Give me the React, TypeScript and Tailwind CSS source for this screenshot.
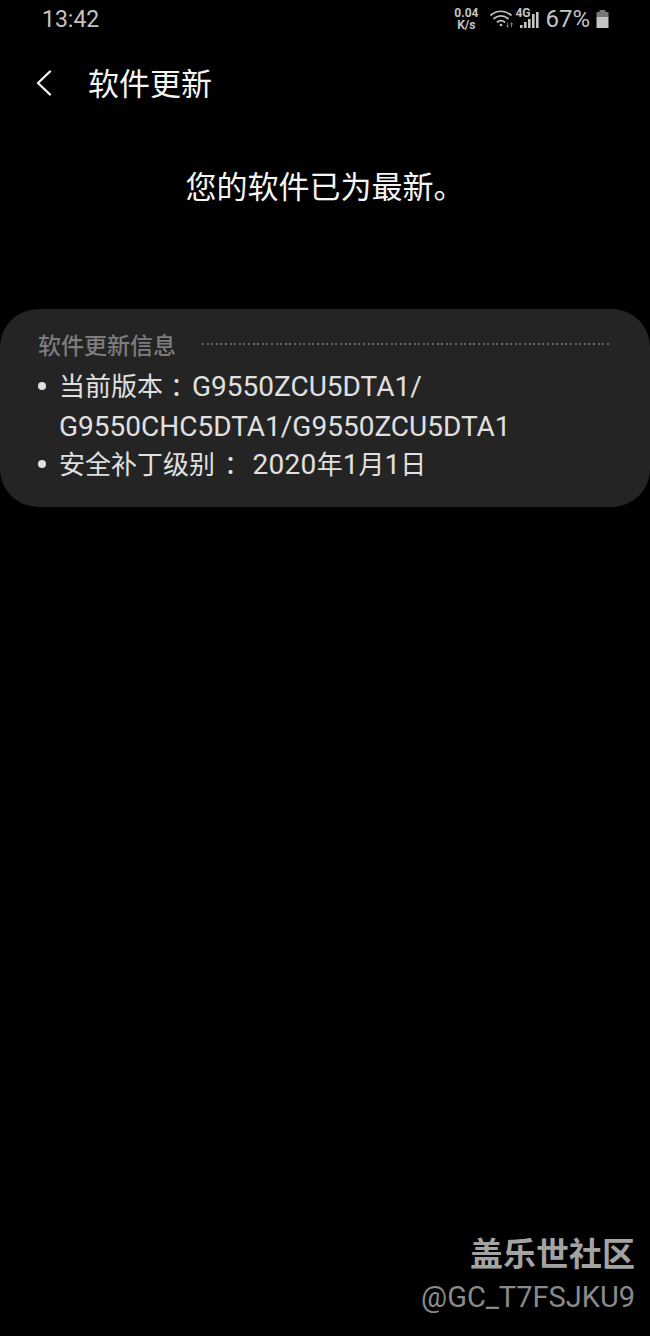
const fontStack = { fontFamily: '"Roboto", "Noto Sans CJK SC", sans-serif' };

function WifiIcon() {
  return (
    <svg width="25" height="20" viewBox="0 0 25 20" fill="none" stroke="#c4c4c4" strokeWidth="1.7" strokeLinecap="round">
      <path d="M1 6C7 1 15 1 21 6" />
      <path d="M4 9.5C8.2 6 13.8 6 18 9.5" />
      <path d="M7.5 13C9.7 11.2 12.3 11.2 14.5 13" />
      <circle cx="11" cy="16" r="1.3" fill="#c4c4c4" stroke="none" />
      <path d="M17.5 14v4M16.3 16.8l1.2 1.4 1.2-1.4" stroke="#777" strokeWidth="1" />
      <path d="M21.5 18v-4M20.3 15.2l1.2-1.4 1.2 1.4" stroke="#777" strokeWidth="1" />
    </svg>
  );
}

function SignalIcon() {
  return (
    <div className="relative w-[26px] h-[20px]">
      <span className="absolute left-0 top-[-2px] text-[12px] font-bold leading-[13px] text-[#c4c4c4]">4G</span>
      <svg className="absolute left-0 top-0" width="26" height="20" viewBox="0 0 26 20" fill="#c4c4c4">
        <rect x="5" y="16" width="2.6" height="3" />
        <rect x="9" y="13" width="2.6" height="6" />
        <rect x="13" y="10" width="2.6" height="9" />
        <rect x="17" y="5" width="2.6" height="14" />
        <rect x="21" y="3" width="2.6" height="16" />
      </svg>
    </div>
  );
}

function BatteryIcon() {
  return (
    <svg width="13" height="18" viewBox="0 0 13 18">
      <rect x="3.5" y="0" width="6" height="2" fill="#777" />
      <rect x="0.5" y="2" width="12" height="5" fill="#777" />
      <rect x="0.5" y="7" width="12" height="11" fill="#c4c4c4" />
    </svg>
  );
}

export default function App() {
  return (
    <div style={fontStack} className="h-[1336px] w-[650px] bg-black overflow-hidden flex flex-col text-white">
      {/* barre de statut */}
      <div className="h-[38px] pl-[42px] pr-[41px] flex items-center justify-between text-[#c4c4c4]">
        <span className="text-[23px] leading-none">13:42</span>
        <div className="flex items-center">
          <div className="flex flex-col items-center text-[12px] font-bold leading-[12px] mr-[12px]">
            <span>0.04</span>
            <span>K/s</span>
          </div>
          <WifiIcon />
          <SignalIcon />
          <span className="text-[24px] leading-none ml-[4px] mr-[6px]">67%</span>
          <BatteryIcon />
        </div>
      </div>

      {/* titre */}
      <div className="h-[92px] flex items-center pl-[36px] pt-[1px]">
        <svg className="-translate-y-[2px]" width="16" height="26" viewBox="0 0 16 26" fill="none" stroke="#f0f0f0" strokeWidth="2.4" strokeLinecap="round" strokeLinejoin="round">
          <path d="M14 1.5L2 13l12 11.5" />
        </svg>
        <h1 className="ml-[37px] -translate-x-[1px] text-[31px] leading-none font-normal text-[#f5f5f5]">软件更新</h1>
      </div>

      <p className="mt-[33px] text-center text-[31px] leading-[50px] text-[#f5f5f5]">您的软件已为最新。</p>

      {/* infos */}
      <div className="mt-[96px] h-[198px] rounded-[38px] bg-[#242424] pl-[38px] pr-[40px] pt-[23px]">
        <div className="flex items-center">
          <span className="text-[23px] leading-[30px] font-medium text-[#7d7d7d]">软件更新信息</span>
          <div className="flex-1 h-[2px] ml-[26px] -translate-y-[3px] bg-[repeating-linear-gradient(90deg,#666666_0_2px,transparent_2px_4.6px)]"></div>
        </div>
        <ul className="mt-[5px] text-[26px] leading-[40px] text-[#e0e0e0]">
          <li className="flex">
            <span className="w-[22px] shrink-0 flex items-start pt-[15px]">
              <span className="w-[8px] h-[8px] rounded-full bg-[#e0e0e0]"></span>
            </span>
            <span className="-ml-[1px]">
              当前版本<span className="ml-[7px] tracking-[-4px]">：</span><span className="text-[28px]">G9550ZCU5DTA1/</span>
              <br />
              <span className="text-[28px]">G9550CHC5DTA1/G9550ZCU5DTA1</span>
            </span>
          </li>
          <li className="flex -mt-[2px]">
            <span className="w-[22px] shrink-0 flex items-start pt-[15px]">
              <span className="w-[8px] h-[8px] rounded-full bg-[#e0e0e0]"></span>
            </span>
            <span className="-ml-[1px]">
              安全补丁级别<span className="ml-[9px] tracking-[-4px]">：</span> <span className="text-[28px] tracking-[0.3px]">2020</span>年<span className="text-[28px]">1</span>月<span className="text-[28px]">1</span>日
            </span>
          </li>
        </ul>
      </div>

      {/* filigrane */}
      <div className="mt-auto pr-[15px] pb-[21px] flex flex-col items-end">
        <span className="text-[33px] leading-[44px] font-bold text-[#a3a3a3] -translate-y-[2px]">盖乐世社区</span>
        <span className="text-[29px] leading-[36px] text-[#8a8a8a]">@GC_T7FSJKU9</span>
      </div>
    </div>
  );
}
